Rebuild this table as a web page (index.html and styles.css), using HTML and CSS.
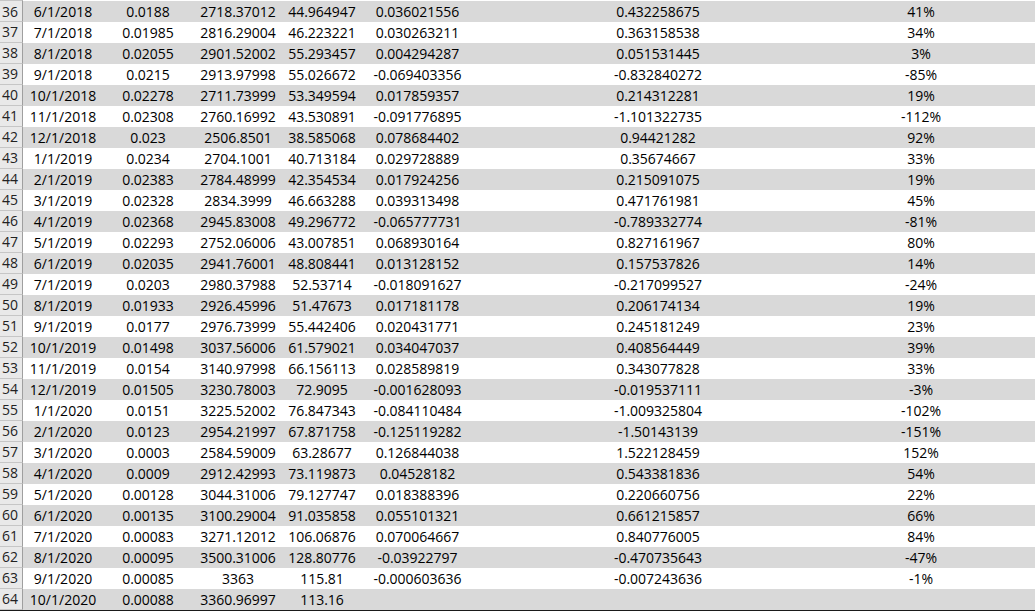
FILE: index.html
```html
<!DOCTYPE html>
<html>
<head>
<meta charset="utf-8">
<link rel="stylesheet" href="styles.css">
</head>
<body>
<div class="sheet">
<div class="row"><div class="hd">36</div><div class="c">6/1/2018</div><div class="c">0.0188</div><div class="c">2718.37012</div><div class="c">44.964947</div><div class="c">0.036021556</div><div class="c">0.432258675</div><div class="c">41%</div><div></div></div>
<div class="row"><div class="hd">37</div><div class="c">7/1/2018</div><div class="c">0.01985</div><div class="c">2816.29004</div><div class="c">46.223221</div><div class="c">0.030263211</div><div class="c">0.363158538</div><div class="c">34%</div><div></div></div>
<div class="row"><div class="hd">38</div><div class="c">8/1/2018</div><div class="c">0.02055</div><div class="c">2901.52002</div><div class="c">55.293457</div><div class="c">0.004294287</div><div class="c">0.051531445</div><div class="c">3%</div><div></div></div>
<div class="row"><div class="hd">39</div><div class="c">9/1/2018</div><div class="c">0.0215</div><div class="c">2913.97998</div><div class="c">55.026672</div><div class="c">-0.069403356</div><div class="c">-0.832840272</div><div class="c">-85%</div><div></div></div>
<div class="row"><div class="hd">40</div><div class="c">10/1/2018</div><div class="c">0.02278</div><div class="c">2711.73999</div><div class="c">53.349594</div><div class="c">0.017859357</div><div class="c">0.214312281</div><div class="c">19%</div><div></div></div>
<div class="row"><div class="hd">41</div><div class="c">11/1/2018</div><div class="c">0.02308</div><div class="c">2760.16992</div><div class="c">43.530891</div><div class="c">-0.091776895</div><div class="c">-1.101322735</div><div class="c">-112%</div><div></div></div>
<div class="row"><div class="hd">42</div><div class="c">12/1/2018</div><div class="c">0.023</div><div class="c">2506.8501</div><div class="c">38.585068</div><div class="c">0.078684402</div><div class="c">0.94421282</div><div class="c">92%</div><div></div></div>
<div class="row"><div class="hd">43</div><div class="c">1/1/2019</div><div class="c">0.0234</div><div class="c">2704.1001</div><div class="c">40.713184</div><div class="c">0.029728889</div><div class="c">0.35674667</div><div class="c">33%</div><div></div></div>
<div class="row"><div class="hd">44</div><div class="c">2/1/2019</div><div class="c">0.02383</div><div class="c">2784.48999</div><div class="c">42.354534</div><div class="c">0.017924256</div><div class="c">0.215091075</div><div class="c">19%</div><div></div></div>
<div class="row"><div class="hd">45</div><div class="c">3/1/2019</div><div class="c">0.02328</div><div class="c">2834.3999</div><div class="c">46.663288</div><div class="c">0.039313498</div><div class="c">0.471761981</div><div class="c">45%</div><div></div></div>
<div class="row"><div class="hd">46</div><div class="c">4/1/2019</div><div class="c">0.02368</div><div class="c">2945.83008</div><div class="c">49.296772</div><div class="c">-0.065777731</div><div class="c">-0.789332774</div><div class="c">-81%</div><div></div></div>
<div class="row"><div class="hd">47</div><div class="c">5/1/2019</div><div class="c">0.02293</div><div class="c">2752.06006</div><div class="c">43.007851</div><div class="c">0.068930164</div><div class="c">0.827161967</div><div class="c">80%</div><div></div></div>
<div class="row"><div class="hd">48</div><div class="c">6/1/2019</div><div class="c">0.02035</div><div class="c">2941.76001</div><div class="c">48.808441</div><div class="c">0.013128152</div><div class="c">0.157537826</div><div class="c">14%</div><div></div></div>
<div class="row"><div class="hd">49</div><div class="c">7/1/2019</div><div class="c">0.0203</div><div class="c">2980.37988</div><div class="c">52.53714</div><div class="c">-0.018091627</div><div class="c">-0.217099527</div><div class="c">-24%</div><div></div></div>
<div class="row"><div class="hd">50</div><div class="c">8/1/2019</div><div class="c">0.01933</div><div class="c">2926.45996</div><div class="c">51.47673</div><div class="c">0.017181178</div><div class="c">0.206174134</div><div class="c">19%</div><div></div></div>
<div class="row"><div class="hd">51</div><div class="c">9/1/2019</div><div class="c">0.0177</div><div class="c">2976.73999</div><div class="c">55.442406</div><div class="c">0.020431771</div><div class="c">0.245181249</div><div class="c">23%</div><div></div></div>
<div class="row"><div class="hd">52</div><div class="c">10/1/2019</div><div class="c">0.01498</div><div class="c">3037.56006</div><div class="c">61.579021</div><div class="c">0.034047037</div><div class="c">0.408564449</div><div class="c">39%</div><div></div></div>
<div class="row"><div class="hd">53</div><div class="c">11/1/2019</div><div class="c">0.0154</div><div class="c">3140.97998</div><div class="c">66.156113</div><div class="c">0.028589819</div><div class="c">0.343077828</div><div class="c">33%</div><div></div></div>
<div class="row"><div class="hd">54</div><div class="c">12/1/2019</div><div class="c">0.01505</div><div class="c">3230.78003</div><div class="c">72.9095</div><div class="c">-0.001628093</div><div class="c">-0.019537111</div><div class="c">-3%</div><div></div></div>
<div class="row"><div class="hd">55</div><div class="c">1/1/2020</div><div class="c">0.0151</div><div class="c">3225.52002</div><div class="c">76.847343</div><div class="c">-0.084110484</div><div class="c">-1.009325804</div><div class="c">-102%</div><div></div></div>
<div class="row"><div class="hd">56</div><div class="c">2/1/2020</div><div class="c">0.0123</div><div class="c">2954.21997</div><div class="c">67.871758</div><div class="c">-0.125119282</div><div class="c">-1.50143139</div><div class="c">-151%</div><div></div></div>
<div class="row"><div class="hd">57</div><div class="c">3/1/2020</div><div class="c">0.0003</div><div class="c">2584.59009</div><div class="c">63.28677</div><div class="c">0.126844038</div><div class="c">1.522128459</div><div class="c">152%</div><div></div></div>
<div class="row"><div class="hd">58</div><div class="c">4/1/2020</div><div class="c">0.0009</div><div class="c">2912.42993</div><div class="c">73.119873</div><div class="c">0.04528182</div><div class="c">0.543381836</div><div class="c">54%</div><div></div></div>
<div class="row"><div class="hd">59</div><div class="c">5/1/2020</div><div class="c">0.00128</div><div class="c">3044.31006</div><div class="c">79.127747</div><div class="c">0.018388396</div><div class="c">0.220660756</div><div class="c">22%</div><div></div></div>
<div class="row"><div class="hd">60</div><div class="c">6/1/2020</div><div class="c">0.00135</div><div class="c">3100.29004</div><div class="c">91.035858</div><div class="c">0.055101321</div><div class="c">0.661215857</div><div class="c">66%</div><div></div></div>
<div class="row"><div class="hd">61</div><div class="c">7/1/2020</div><div class="c">0.00083</div><div class="c">3271.12012</div><div class="c">106.06876</div><div class="c">0.070064667</div><div class="c">0.840776005</div><div class="c">84%</div><div></div></div>
<div class="row"><div class="hd">62</div><div class="c">8/1/2020</div><div class="c">0.00095</div><div class="c">3500.31006</div><div class="c">128.80776</div><div class="c">-0.03922797</div><div class="c">-0.470735643</div><div class="c">-47%</div><div></div></div>
<div class="row"><div class="hd">63</div><div class="c">9/1/2020</div><div class="c">0.00085</div><div class="c">3363</div><div class="c">115.81</div><div class="c">-0.000603636</div><div class="c">-0.007243636</div><div class="c">-1%</div><div></div></div>
<div class="row"><div class="hd">64</div><div class="c">10/1/2020</div><div class="c">0.00088</div><div class="c">3360.96997</div><div class="c">113.16</div><div class="c"></div><div class="c"></div><div class="c"></div><div></div></div>
</div>
</body>
</html>
```

FILE: styles.css
```css
html, body {
  margin: 0;
  padding: 0;
  background: #ffffff;
}
.sheet {
  width: 1035px;
  padding-top: 1px;
  font-family: "Open Sans", "Liberation Sans", sans-serif;
  font-size: 14px;
  color: #000000;
  border-bottom: 1px solid #1a1a1a;
}
.row {
  display: grid;
  grid-template-columns: 23px 80px 90px 90px 78px 113px 368px 158px 1fr;
  height: 21px;
  line-height: 21px;
  white-space: nowrap;
}
.row:nth-child(odd) {
  background: #d9d9d9;
}
.hd {
  background: #e9e9e9;
  border-right: 1px solid #9f9f9f;
  border-bottom: 1px solid #c6c6c6;
  box-sizing: border-box;
  text-align: center;
  line-height: 20px;
  color: #222222;
  padding-right: 2px;
}
.row:first-child .hd {
  border-top: 1px solid #c6c6c6;
  margin-top: -1px;
  height: 22px;
  line-height: 21px;
}
.c {
  text-align: center;
}
```
